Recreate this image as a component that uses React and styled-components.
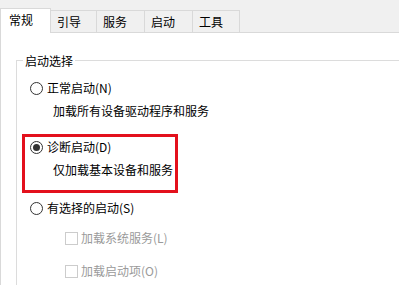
import React from 'react';
import styled, { createGlobalStyle } from 'styled-components';

const Global = createGlobalStyle`
  html, body { margin: 0; padding: 0; background: #f0f0f0; }
  body { font-family: "Noto Sans CJK SC", "Microsoft YaHei", sans-serif; }
`;

const Window = styled.div`
  width: 399px;
  height: 285px;
  overflow: hidden;
  background: #f0f0f0;
  display: flex;
  flex-direction: column;
  font-size: 12px;
  color: #000;
`;

const TabBar = styled.div`
  display: flex;
  align-items: flex-end;
  height: 32px;
  flex: none;
  position: relative;
  z-index: 1;
`;

const Tab = styled.div`
  box-sizing: border-box;
  width: ${(p) => p.$w}px;
  height: ${(p) => (p.$active ? 25 : 22)}px;
  margin-bottom: ${(p) => (p.$active ? -1 : 0)}px;
  padding-left: ${(p) => (p.$active ? 8 : 6)}px;
  background: ${(p) => (p.$active ? '#fff' : '#f0f0f0')};
  border-top: 1px solid #d9d9d9;
  border-right: 1px solid #d9d9d9;
  border-left: ${(p) => (p.$active ? '1px solid #d9d9d9' : 'none')};
  display: flex;
  align-items: center;
  font-size: 12px;
  line-height: 18px;
  padding-bottom: ${(p) => (p.$active ? 2 : 0)}px;
`;

const Panel = styled.div`
  flex: 1;
  background: #fff;
  border-top: 1px solid #d9d9d9;
  border-left: 1px solid #d9d9d9;
  padding: 19px 0 0 15px;
`;

const Group = styled.fieldset`
  margin: 0;
  padding: 0;
  border: 1px solid #dcdcdc;
  width: 430px;
  height: 300px;
  box-sizing: border-box;
`;

const Legend = styled.legend`
  margin-left: 6px;
  padding: 0 2px;
  font-size: 12px;
  line-height: 17px;
  color: #000;
`;

const Options = styled.div`
  display: flex;
  flex-direction: column;
  padding: 9px 0 0 13px;
`;

const Row = styled.div`
  display: flex;
  align-items: center;
  gap: ${(p) => p.$gap ?? 4}px;
  height: 20px;
  line-height: 20px;
  margin-top: ${(p) => p.$mt || 0}px;
  padding-left: ${(p) => p.$indent || 0}px;
  color: ${(p) => (p.$disabled ? '#9a9a9a' : '#000')};
  white-space: nowrap;
`;

const Radio = styled.span`
  box-sizing: border-box;
  width: 13px;
  height: 13px;
  border-radius: 50%;
  border: 1px solid #333;
  background: #fff;
  display: inline-flex;
  align-items: center;
  justify-content: center;
  flex: none;
  &::after {
    content: '';
    width: 7px;
    height: 7px;
    border-radius: 50%;
    background: ${(p) => (p.$checked ? '#333' : 'transparent')};
  }
`;

const Check = styled.span`
  box-sizing: border-box;
  width: 13px;
  height: 13px;
  border: 1px solid #cccccc;
  background: #fff;
  flex: none;
`;

const Highlight = styled.div`
  box-sizing: border-box;
  width: 156px;
  margin: 13px 0 0 -8px;
  border: 3px solid #e3101c;
  padding: 0 0 10px 5px;
  display: flex;
  flex-direction: column;
`;

const tabs = [
  { label: '常规', w: 51, active: true },
  { label: '引导', w: 46 },
  { label: '服务', w: 48 },
  { label: '启动', w: 48 },
  { label: '工具', w: 47 },
];

export default function App() {
  return (
    <>
      <Global />
      <Window>
        <TabBar>
          {tabs.map((t) => (
            <Tab key={t.label} $w={t.w} $active={t.active}>
              {t.label}
            </Tab>
          ))}
        </TabBar>
        <Panel>
          <Group>
            <Legend>启动选择</Legend>
            <Options>
              <Row>
                <Radio />
                <span>正常启动(N)</span>
              </Row>
              <Row $mt={3} $indent={23}>加载所有设备驱动程序和服务</Row>
              <Highlight>
                <Row>
                  <Radio $checked />
                  <span>诊断启动(D)</span>
                </Row>
                <Row $mt={3} $indent={23}>仅加载基本设备和服务</Row>
              </Highlight>
              <Row $mt={5}>
                <Radio />
                <span>有选择的启动(S)</span>
              </Row>
              <Row $mt={10} $indent={35} $gap={3} $disabled>
                <Check />
                <span>加载系统服务(L)</span>
              </Row>
              <Row $mt={13} $indent={35} $gap={3} $disabled>
                <Check />
                <span>加载启动项(O)</span>
              </Row>
            </Options>
          </Group>
        </Panel>
      </Window>
    </>
  );
}
